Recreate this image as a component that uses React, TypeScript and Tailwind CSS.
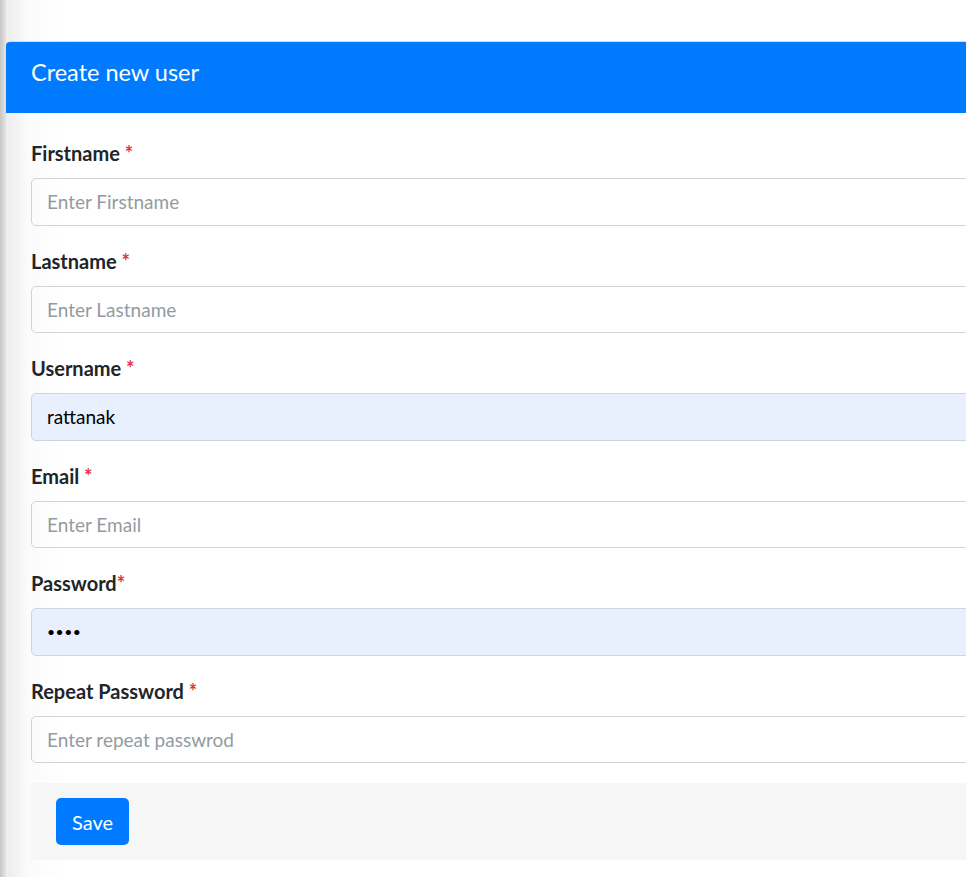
import React from 'react'

const FONT = "font-['Lato','Open_Sans',sans-serif]"

interface Field {
  label: string
  name: string
  type: string
  placeholder: string
  value?: string
  tight?: boolean
}

const FIELDS: Field[] = [
  { label: 'Firstname', name: 'firstname', type: 'text', placeholder: 'Enter Firstname' },
  { label: 'Lastname', name: 'lastname', type: 'text', placeholder: 'Enter Lastname' },
  { label: 'Username', name: 'username', type: 'text', placeholder: 'Enter Username', value: 'rattanak' },
  { label: 'Email', name: 'email', type: 'email', placeholder: 'Enter Email' },
  { label: 'Password', name: 'password', type: 'password', placeholder: 'Enter Password', value: 'abcd', tight: true },
  { label: 'Repeat Password', name: 'repeat', type: 'password', placeholder: 'Enter repeat passwrod' },
]

function FormGroup({ field }: { field: Field }) {
  const filled = !!field.value
  const secret = field.type === 'password' && filled
  return (
    <div className="mb-[20px]">
      <label htmlFor={field.name} className="block h-[30px] mb-[10px] text-[20px] leading-[30px] font-bold text-[#212529]">
        {field.label}
        {field.tight ? '' : ' '}
        <span className="text-[#dc3545]">*</span>
      </label>
      <input
        id={field.name}
        name={field.name}
        type={field.type}
        placeholder={field.placeholder}
        defaultValue={field.value}
        className={`block w-full h-[47.5px] px-[15px] rounded-[5px] border border-[#ced4da] outline-none placeholder:text-[#939ba2] ${
          secret ? 'text-[14px] tracking-[0.5px]' : 'text-[19px]'
        } ${filled ? 'bg-[#e8f0fe] text-black' : 'bg-transparent text-[#495057]'}`}
      />
    </div>
  )
}

export default function App() {
  return (
    <div className={`flex w-screen h-screen overflow-hidden bg-white ${FONT}`}>
      {/* sidebar edge */}
      <div className="w-[6px] shrink-0 bg-gradient-to-r from-[#c6c6c6] to-[#e4e4e4]" />

      <div className="flex-1 min-w-0 bg-[linear-gradient(to_right,#ececec,#fbfbfb_22px,#fff_60px)]">
        <div className="h-[41px]" />

        {/* Card */}
        <div className="w-[1100px] border-t border-[#dcdcdc] rounded-tl-[5px]">
          <div className="h-[71px] pt-[12px] px-[25px] bg-[#007bff] rounded-tl-[4px]">
            <h3 className="text-[23.5px] leading-[36px] font-normal text-white">Create new user</h3>
          </div>

          <form className="px-[25px] pt-[25px]" onSubmit={e => e.preventDefault()}>
            {FIELDS.map(f => (
              <FormGroup key={f.name} field={f} />
            ))}

            {/* Footer */}
            <div className="h-[77px] px-[25px] pt-[15px] bg-[#f6f6f6]">
              <button
                type="submit"
                className="h-[47px] px-[16px] rounded-[5px] bg-[#007bff] text-white text-[20px] leading-[30px]"
              >
                Save
              </button>
            </div>
          </form>
        </div>
      </div>
    </div>
  )
}
